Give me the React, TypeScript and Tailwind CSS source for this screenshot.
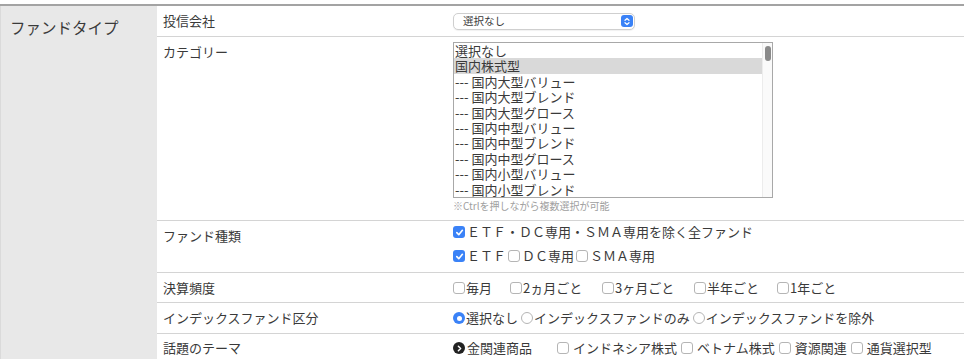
import { ChevronRight } from 'lucide-react';

const categories = [
  { label: '選択なし', selected: false },
  { label: '国内株式型', selected: true },
  { label: '--- 国内大型バリュー', selected: false },
  { label: '--- 国内大型ブレンド', selected: false },
  { label: '--- 国内大型グロース', selected: false },
  { label: '--- 国内中型バリュー', selected: false },
  { label: '--- 国内中型ブレンド', selected: false },
  { label: '--- 国内中型グロース', selected: false },
  { label: '--- 国内小型バリュー', selected: false },
  { label: '--- 国内小型ブレンド', selected: false },
];

const Check = ({ checked = false }: { checked?: boolean }) =>
  checked ? (
    <span className="inline-flex w-[12px] h-[12px] shrink-0 items-center justify-center rounded-[3px] bg-[#3a82f7]">
      <svg width="9" height="9" viewBox="0 0 10 10">
        <path d="M2 5.2 L4.2 7.4 L8.2 2.6" stroke="#fff" strokeWidth="1.8" fill="none" strokeLinecap="round" strokeLinejoin="round" />
      </svg>
    </span>
  ) : (
    <span className="inline-block w-[12px] h-[12px] shrink-0 rounded-[3px] border border-[#b5b5b5] bg-white" />
  );

const Radio = ({ checked = false }: { checked?: boolean }) =>
  checked ? (
    <span className="inline-flex w-[12px] h-[12px] shrink-0 items-center justify-center rounded-full bg-[#3a82f7]">
      <span className="w-[5px] h-[5px] rounded-full bg-white" />
    </span>
  ) : (
    <span className="inline-block w-[12px] h-[12px] shrink-0 rounded-full border border-[#b5b5b5] bg-white" />
  );

const Row = ({
  label,
  className,
  children,
}: {
  label: string;
  className: string;
  children: React.ReactNode;
}) => (
  <div className={`flex border-b border-[#d4d4d4] ${className}`}>
    <div className="w-[296px] shrink-0 pl-[6px] pt-[5px] leading-[20px]">{label}</div>
    <div className="flex-1 pt-[5px]">{children}</div>
  </div>
);

export default function App() {
  return (
    <div
      className="bg-white w-[964px] h-[359px] overflow-hidden pt-[4px] text-[13px] text-[#3a3a3a]"
      style={{ fontFamily: '"Noto Sans CJK JP", "Noto Sans", sans-serif' }}
    >
      <div className="flex border-t-2 border-[#a3a3a3] h-full">
        {/* Left heading */}
        <div className="w-[157px] shrink-0 bg-[#e8e8e8] border-l border-[#dadada] pl-[9px] pt-[11px] text-[15.5px] leading-[20px]">
          ファンドタイプ
        </div>

        {/* Rows */}
        <div className="flex-1">
          <Row label="投信会社" className="h-[31px]">
            <div className="relative mt-[2px] w-[182px] h-[17px] rounded-[5px] border border-[#cfcfcf] bg-white shadow-[0_1px_1px_rgba(0,0,0,0.06)] flex items-center pl-[9px] text-[10.5px] leading-none">
              選択なし
              <span className="absolute right-[1px] top-[1px] w-[12px] h-[12px] rounded-[3px] bg-[#3a82f7] flex items-center justify-center">
                <svg width="8" height="9" viewBox="0 0 8 9">
                  <path d="M2 3.3 L4 1.5 L6 3.3 M2 5.7 L4 7.5 L6 5.7" stroke="#fff" strokeWidth="1.2" fill="none" strokeLinecap="round" strokeLinejoin="round" />
                </svg>
              </span>
            </div>
          </Row>

          <Row label="カテゴリー" className="h-[184px]">
            <div className="relative w-[320px] h-[156px] border border-[#a8a8a8] bg-white overflow-hidden">
              <div className="mr-[10px]">
                {categories.map((c) => (
                  <div
                    key={c.label}
                    className={`h-[15.4px] leading-[15.4px] pl-[1px] whitespace-nowrap ${c.selected ? 'bg-[#d9d9d9]' : ''}`}
                  >
                    {c.label}
                  </div>
                ))}
              </div>
              <div className="absolute right-0 top-0 bottom-0 w-[10px] bg-[#fafafa] border-l border-[#ececec]">
                <div className="mx-auto mt-[3px] w-[6px] h-[15px] rounded-full bg-[#8a8a8a]" />
              </div>
            </div>
            <div className="text-[10px] leading-[16px] text-[#a0a0a0]">※Ctrlを押しながら複数選択が可能</div>
          </Row>

          <Row label="ファンド種類" className="h-[52px]">
            <div className="flex items-center h-[18px] -mt-[3px]">
              <Check checked />
              <span className="ml-[2px]">ＥＴＦ・ＤＣ専用・ＳＭＡ専用を除く全ファンド</span>
            </div>
            <div className="flex items-center h-[24px] mt-[3px]">
              <Check checked />
              <span className="ml-[2px] mr-[2px]">ＥＴＦ</span>
              <Check />
              <span className="ml-[2px] mr-[2px]">ＤＣ専用</span>
              <Check />
              <span className="ml-[2px]">ＳＭＡ専用</span>
            </div>
          </Row>

          <Row label="決算頻度" className="h-[30px]">
            <div className="flex items-center h-[20px]">
              <div className="flex items-center w-[57px]">
                <Check />
                <span className="ml-[1px]">毎月</span>
              </div>
              <div className="flex items-center w-[92px]">
                <Check />
                <span className="ml-[1px]">2ヵ月ごと</span>
              </div>
              <div className="flex items-center w-[92px]">
                <Check />
                <span className="ml-[1px]">3ヶ月ごと</span>
              </div>
              <div className="flex items-center w-[83px]">
                <Check />
                <span className="ml-[1px]">半年ごと</span>
              </div>
              <div className="flex items-center">
                <Check />
                <span className="ml-[1px]">1年ごと</span>
              </div>
            </div>
          </Row>

          <Row label="インデックスファンド区分" className="h-[31px]">
            <div className="flex items-center h-[20px]">
              <Radio checked />
              <span className="ml-[1px] mr-[3px]">選択なし</span>
              <Radio />
              <span className="ml-[1px] mr-[3px]">インデックスファンドのみ</span>
              <Radio />
              <span className="ml-[1px]">インデックスファンドを除外</span>
            </div>
          </Row>

          <div className="flex">
            <div className="w-[296px] shrink-0 pl-[6px] pt-[4px] leading-[20px]">話題のテーマ</div>
            <div className="flex-1 pt-[4px]">
              <div className="flex items-center h-[20px]">
                <span className="inline-flex w-[12px] h-[12px] items-center justify-center rounded-full bg-[#222]">
                  <ChevronRight size={9} strokeWidth={4} color="#fff" />
                </span>
                <span className="ml-[2px] w-[90px]">金関連商品</span>
                <Check />
                <span className="ml-[4px] mr-[4px]">インドネシア株式</span>
                <Check />
                <span className="ml-[4px] mr-[4px]">ベトナム株式</span>
                <Check />
                <span className="ml-[4px] mr-[4px]">資源関連</span>
                <Check />
                <span className="ml-[4px]">通貨選択型</span>
              </div>
            </div>
          </div>
        </div>
      </div>
    </div>
  );
}
